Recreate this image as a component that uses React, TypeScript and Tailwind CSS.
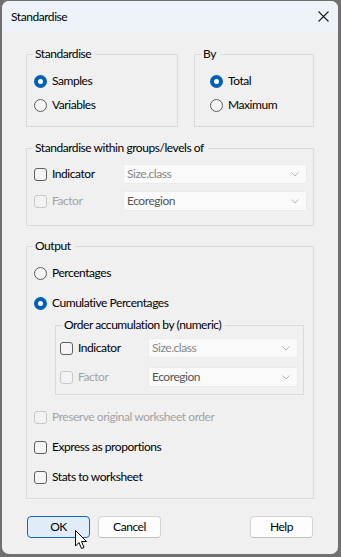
import React from "react";

const font = { fontFamily: 'Lato, "Noto Sans", sans-serif' };

function Radio({ checked, label }: { checked?: boolean; label: string }) {
  return (
    <div className="flex items-center h-[24px]">
      {checked ? (
        <span className="w-[13px] h-[13px] rounded-full bg-[#005fb8] flex items-center justify-center shrink-0">
          <span className="w-[5px] h-[5px] rounded-full bg-white" />
        </span>
      ) : (
        <span className="w-[13px] h-[13px] rounded-full border border-[#5f5f5f] bg-[#f5f5f5] shrink-0" />
      )}
      <span className="ml-[5px] text-black">{label}</span>
    </div>
  );
}

function Check({ label, disabled }: { label: string; disabled?: boolean }) {
  return (
    <div className="flex items-center">
      <span
        className={
          disabled
            ? "w-[13px] h-[13px] rounded-[3px] border border-[#c8c8c8] bg-[#f3f3f3] shrink-0"
            : "w-[13px] h-[13px] rounded-[3px] border border-[#5f5f5f] bg-[#f5f5f5] shrink-0"
        }
      />
      <span className={disabled ? "ml-[5px] text-[#a3a3a3]" : "ml-[5px] text-black"}>{label}</span>
    </div>
  );
}

function Combo({ value, dark }: { value: string; dark?: boolean }) {
  return (
    <div className="flex-1 h-[20px] bg-[#fafafa] border border-[#ebebeb] rounded-[2px] flex items-center justify-between pl-[3px] pr-[7px]">
      <span className={dark ? "text-[#555555]" : "text-[#858585]"}>{value}</span>
      <svg width="8" height="5" viewBox="0 0 8 5">
        <path d="M0.5 0.5 L4 4 L7.5 0.5" fill="none" stroke="#b5b5b5" strokeWidth="1" />
      </svg>
    </div>
  );
}

function Legend({ children }: { children: React.ReactNode }) {
  return <legend className="ml-[6px] pl-[2px] pr-[4px] leading-[16px] text-black">{children}</legend>;
}

export default function App() {
  return (
    <div
      className="w-[341px] h-[557px] bg-[#707070] pl-[2px] pt-[1px] pr-[3px] pb-[3px] text-[12px] leading-[16px] tracking-[-0.45px]"
      style={font}
    >
      <div className="relative h-full rounded-[7px] bg-[#f0f0f0] flex flex-col overflow-hidden">
        <div className="h-[31px] bg-[#eef3f9] flex items-center justify-between pl-[9px] pr-[9px]">
          <span className="text-black">Standardise</span>
          <svg width="11" height="11" viewBox="0 0 11 11">
            <path d="M0.5 0.5 L10.5 10.5 M10.5 0.5 L0.5 10.5" stroke="#1a1a1a" strokeWidth="1.1" />
          </svg>
        </div>

        <div className="px-[24px] pt-[14px] flex flex-col">
          <div className="flex gap-[16px]">
            <fieldset className="w-[152px] border border-[#dadada]">
              <Legend>Standardise</Legend>
              <div className="pl-[7px] pt-[7px] pb-[9px]">
                <Radio checked label="Samples" />
                <Radio label="Variables" />
              </div>
            </fieldset>
            <fieldset className="flex-1 border border-[#dadada]">
              <Legend>By</Legend>
              <div className="pl-[15px] pt-[7px] pb-[9px]">
                <Radio checked label="Total" />
                <Radio label="Maximum" />
              </div>
            </fieldset>
          </div>

          <fieldset className="mt-[13px] border border-[#dadada]">
            <Legend>Standardise within groups/levels of</Legend>
            <div className="pl-[7px] pr-[6px] pt-[8px] pb-[14px]">
              <div className="flex items-center h-[20px]">
                <div className="w-[89px]">
                  <Check label="Indicator" />
                </div>
                <Combo value="Size.class" />
              </div>
              <div className="flex items-center h-[20px] mt-[7px]">
                <div className="w-[89px]">
                  <Check label="Factor" disabled />
                </div>
                <Combo value="Ecoregion" dark />
              </div>
            </div>
          </fieldset>

          <fieldset className="mt-[12px] border border-[#dadada]">
            <Legend>Output</Legend>
            <div className="pl-[7px] pr-[9px] pt-[5px] pb-[6px]">
              <div className="h-[28px] flex items-center">
                <Radio label="Percentages" />
              </div>
              <div className="h-[28px] mt-[2px] flex items-center">
                <Radio checked label="Cumulative Percentages" />
              </div>
              <fieldset className="ml-[21px] border border-[#dadada]">
                <Legend>Order accumulation by (numeric)</Legend>
                <div className="pl-[4px] pr-[5px] pt-[5px] pb-[7px]">
                  <div className="flex items-center h-[20px]">
                    <div className="w-[88px]">
                      <Check label="Indicator" />
                    </div>
                    <Combo value="Size.class" />
                  </div>
                  <div className="flex items-center h-[20px] mt-[9px]">
                    <div className="w-[88px]">
                      <Check label="Factor" disabled />
                    </div>
                    <Combo value="Ecoregion" dark />
                  </div>
                </div>
              </fieldset>
              <div className="h-[30px] mt-[7px] flex items-center">
                <Check label="Preserve original worksheet order" disabled />
              </div>
              <div className="h-[30px] flex items-center">
                <Check label="Express as proportions" />
              </div>
              <div className="h-[30px] flex items-center">
                <Check label="Stats to worksheet" />
              </div>
            </div>
          </fieldset>

          <div className="mt-[17px] px-[1px] flex justify-between">
            <div className="flex gap-[8px]">
              <button className="w-[63px] h-[22px] rounded-[4px] border border-[#0f67be] bg-[#e0edf9] text-black">
                OK
              </button>
              <button className="w-[63px] h-[22px] rounded-[4px] border border-[#d3d3d3] border-b-[#c0c0c0] bg-[#fdfdfd] text-black">
                Cancel
              </button>
            </div>
            <button className="w-[63px] h-[22px] rounded-[4px] border border-[#d3d3d3] border-b-[#c0c0c0] bg-[#fdfdfd] text-black">
              Help
            </button>
          </div>
        </div>

        <svg
          className="absolute left-[73px] top-[529px]"
          width="13"
          height="20"
          viewBox="0 0 13 20"
        >
          <path
            d="M0.5 0.5 L0.5 16 L4 12.5 L6.5 18.5 L9 17.5 L6.5 11.5 L11.5 11.5 Z"
            fill="white"
            stroke="black"
            strokeWidth="1"
            strokeLinejoin="round"
          />
        </svg>
      </div>
    </div>
  );
}
